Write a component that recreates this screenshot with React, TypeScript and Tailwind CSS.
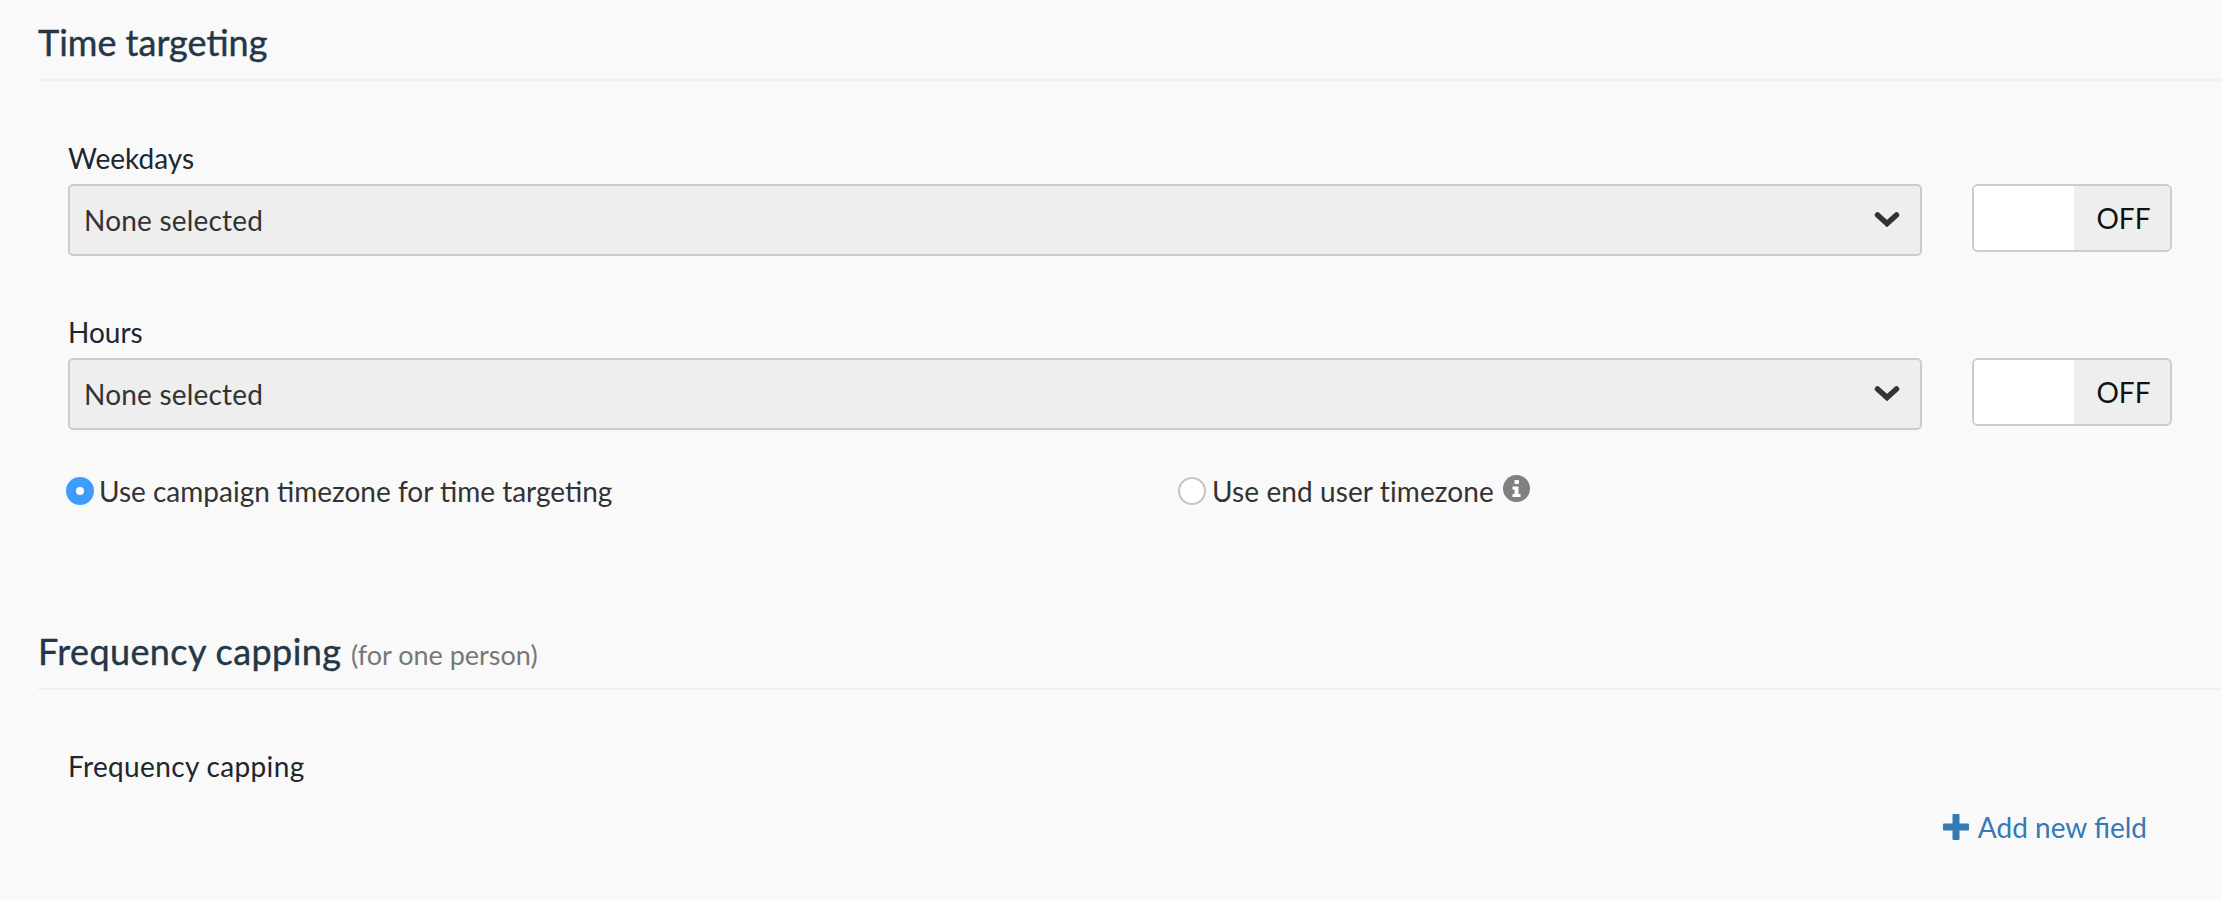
const font = { fontFamily: '"Lato", "Open Sans", sans-serif' };

function Row({ label, mt }: { label: string; mt: string }) {
  return (
    <div className={mt}>
      <div className="h-[26px] text-[28px] leading-[26px] text-[#20262e]">{label}</div>
      <div className="mt-[13px] flex items-start">
        <div className="flex h-[72px] w-[1854px] items-center justify-between rounded-[5px] border-2 border-[#cccccc] bg-[#eeeeee] pl-[14px] pr-[20px]">
          <span className="text-[28px] tracking-[0.2px] text-[#333333]">None selected</span>
          <svg width="26" height="18" viewBox="0 0 26 18" className="-mt-[2px] text-[#333333]">
            <path d="M3.5 5 L13 13.500 L22.500 5" fill="none" stroke="currentColor" strokeWidth="5.5" strokeLinecap="round" strokeLinejoin="miter" />
          </svg>
        </div>
        <div className="ml-[50px] flex h-[68px] w-[200px] overflow-hidden rounded-[6px] border-2 border-[#cccccc]">
          <div className="w-[100px] bg-white" />
          <div className="flex flex-1 items-center justify-center bg-[#eeeeee] pl-[3px] text-[28px] text-[#111111]">OFF</div>
        </div>
      </div>
    </div>
  );
}

function Heading({ children }: { children: React.ReactNode }) {
  return <div className="border-b-2 border-[#f0f0f0] pb-[13px]">{children}</div>;
}

export default function App() {
  return (
    <div className="h-[900px] w-[2222px] overflow-hidden bg-[#f9f9f9] pl-[38px]" style={font}>
      <div className="pt-[19px]">
        <Heading>
          <h2 className="h-[47px] text-[36px] font-normal leading-[47px] text-[#253746] [-webkit-text-stroke:0.4px_#253746]">Time targeting</h2>
        </Heading>
      </div>
      <div className="pl-[30px]">
        <Row label="Weekdays" mt="mt-[64px]" />
        <Row label="Hours" mt="mt-[63px]" />
        <div className="mt-[46px] flex h-[30px] items-center text-[28px] text-[#333333]">
          <div className="flex w-[1110px] items-center">
            <span className="-ml-[2px] flex h-[28px] w-[28px] items-center justify-center rounded-full bg-[#3f9cff]">
              <span className="h-[8px] w-[8px] rounded-full bg-white" />
            </span>
            <span className="ml-[5px]">Use campaign timezone for time targeting</span>
          </div>
          <span className="h-[28px] w-[28px] rounded-full border-2 border-[#c4c4c4] bg-white" />
          <span className="ml-[6px] tracking-[0.1px]">Use end user timezone</span>
          <span className="-mt-[6px] ml-[9px] flex h-[27px] w-[27px] items-center justify-center rounded-full bg-[#808080]">
            <svg width="11" height="17" viewBox="0 0 11 17" fill="white">
              <rect x="3.5" y="0" width="4.5" height="4" rx="1" />
              <path d="M1.5 6.5 H7.5 V14 H9.5 V17 H1.5 V14 H3.5 V9.5 H1.5 Z" />
            </svg>
          </span>
        </div>
      </div>
      <div className="mt-[122px]">
        <Heading>
          <h2 className="h-[47px] text-[36px] font-normal leading-[47px] tracking-[0.4px] text-[#253746] [-webkit-text-stroke:0.4px_#253746]">
            Frequency capping <span className="text-[27px] tracking-normal text-[#777777] [-webkit-text-stroke:0px]">(for one person)</span>
          </h2>
        </Heading>
      </div>
      <div className="pl-[30px]">
        <div className="mt-[62px] h-[28px] text-[28px] leading-[28px] tracking-[0.35px] text-[#20262e]">Frequency capping</div>
        <div className="mt-[26px] flex justify-end pr-[75px]">
          <div className="flex items-center text-[28px] text-[#337ab7]">
            <svg width="26" height="26" viewBox="0 0 26 26" fill="currentColor">
              <path d="M9.500 1 a1 1 0 0 1 1 -1 h5 a1 1 0 0 1 1 1 v8.500 h8.500 a1 1 0 0 1 1 1 v5 a1 1 0 0 1 -1 1 h-8.500 v8.500 a1 1 0 0 1 -1 1 h-5 a1 1 0 0 1 -1 -1 v-8.500 h-8.500 a1 1 0 0 1 -1 -1 v-5 a1 1 0 0 1 1 -1 h8.500 z" />
            </svg>
            <span className="ml-[9px]">Add new field</span>
          </div>
        </div>
      </div>
    </div>
  );
}
